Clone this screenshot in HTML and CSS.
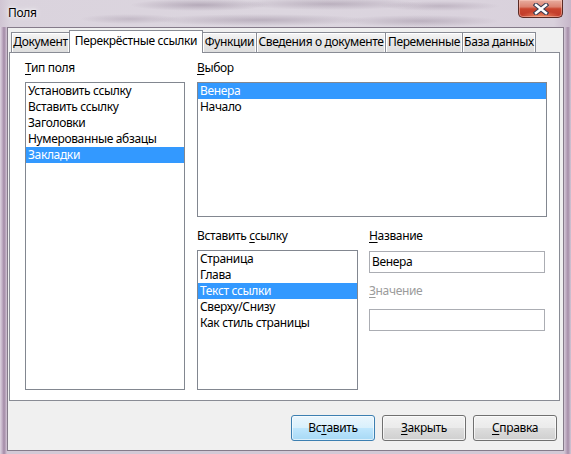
FILE: index.html
```html
<!DOCTYPE html>
<html lang="ru">
<head>
<meta charset="utf-8">
<title>Поля</title>
<link rel="stylesheet" href="styles.css">
</head>
<body>
<div class="window">
  <div class="titlebar">
    <span class="title">Поля</span>
    <div class="close">
      <svg width="16" height="12" viewBox="0 0 16 12">
        <path d="M3 2 L13 10 M13 2 L3 10" stroke="#3b3d52" stroke-width="4.6" stroke-linecap="square" fill="none"/>
        <path d="M3 2 L13 10 M13 2 L3 10" stroke="#ffffff" stroke-width="2.4" stroke-linecap="square" fill="none"/>
      </svg>
    </div>
  </div>
  <div class="client">
    <div class="tabs">
      <div class="tab t1">Документ</div>
      <div class="tab t2 active">Перекрёстные ссылки</div>
      <div class="tab t3">Функции</div>
      <div class="tab t4">Сведения о документе</div>
      <div class="tab t5">Переменные</div>
      <div class="tab t6">База данных</div>
    </div>
    <div class="panel">
      <div class="col col-left">
        <div class="label"><u>Т</u>ип поля</div>
        <ul class="list grow">
          <li>Установить ссылку</li>
          <li>Вставить ссылку</li>
          <li>Заголовки</li>
          <li>Нумерованные абзацы</li>
          <li class="sel">Закладки</li>
        </ul>
      </div>
      <div class="col col-right">
        <div class="label"><u>В</u>ыбор</div>
        <ul class="list list-choice">
          <li class="sel">Венера</li>
          <li>Начало</li>
        </ul>
        <div class="lower">
          <div class="col">
            <div class="label">Вставить <u>с</u>сылку</div>
            <ul class="list grow">
              <li>Страница</li>
              <li>Глава</li>
              <li class="sel">Текст ссылки</li>
              <li>Сверху/Снизу</li>
              <li>Как стиль страницы</li>
            </ul>
          </div>
          <div class="col">
            <div class="label"><u>Н</u>азвание</div>
            <div class="input">Венера</div>
            <div class="label disabled value-label"><u>З</u>начение</div>
            <div class="input input-second"></div>
          </div>
        </div>
      </div>
    </div>
    <div class="buttons">
      <div class="btn default">Вс<u>т</u>авить</div>
      <div class="btn"><u>З</u>акрыть</div>
      <div class="btn"><u>С</u>правка</div>
    </div>
  </div>
</div>
</body>
</html>
```

FILE: styles.css
```css
* { box-sizing: border-box; margin: 0; padding: 0; }
html, body { width: 571px; height: 454px; overflow: hidden; }
body {
  font-family: "Noto Sans", "Open Sans", sans-serif;
  font-size: 12px;
  line-height: 16px;
  letter-spacing: -0.35px;
  color: #000;
  background: #d6cfd9;
}
u { text-decoration: underline; text-underline-offset: 2px; }

.window {
  width: 571px;
  height: 454px;
  display: flex;
  flex-direction: column;
  padding: 0 7px 3px;
  background:
    linear-gradient(to right,
      #ddd4e0 0px, #c5b3c8 2px, #a28aa6 4px, #c2b0c5 6px, #d3c9d6 7px,
      #d3c9d6 564px, #c0adc3 566px, #a58ea8 568px, #d3c7d6 571px);
}

.titlebar {
  height: 27px;
  margin: 0 -7px;
  padding: 0 8px;
  display: flex;
  justify-content: space-between;
  align-items: flex-start;
  background:
    radial-gradient(ellipse 70px 6px at 200px 5px, rgba(110, 90, 115, .35), transparent),
    radial-gradient(ellipse 90px 6px at 330px 4px, rgba(110, 90, 115, .30), transparent),
    radial-gradient(ellipse 60px 5px at 440px 6px, rgba(110, 90, 115, .25), transparent),
    radial-gradient(ellipse 110px 6px at 260px 20px, rgba(110, 90, 115, .30), transparent),
    radial-gradient(ellipse 80px 6px at 420px 21px, rgba(110, 90, 115, .28), transparent),
    radial-gradient(ellipse 50px 5px at 130px 19px, rgba(110, 90, 115, .22), transparent),
    linear-gradient(to right, #d0c5d3 0px, #dad3dd 10px, #dcd6df 50%, #d9d1dc 97%, #c6b6c9 100%);
}
.title {
  padding-top: 5px;
  line-height: 16px;
  color: #000;
  text-shadow: 0 0 6px #fff, 0 0 3px #fff;
}
.close {
  width: 45px;
  height: 18px;
  border: 1px solid #5a2a24;
  border-top: none;
  border-radius: 0 0 5px 5px;
  background:
    radial-gradient(ellipse 20px 6px at 50% 100%, rgba(255, 170, 120, .8), transparent),
    linear-gradient(#e8ad9f 0%, #dc8371 40%, #c9452e 52%, #c0392a 100%);
  box-shadow: inset 0 0 0 1px rgba(255, 210, 200, .45);
  display: flex;
  align-items: center;
  justify-content: center;
}

.client {
  flex: 1;
  display: flex;
  flex-direction: column;
  border: 1px solid #857b8a;
  background: #f0f0f0;
  padding: 2px 3px 0 1px;
}

.tabs {
  display: flex;
  align-items: flex-end;
  height: 22px;
  padding-left: 2px;
  position: relative;
  z-index: 1;
}
.tab {
  height: 20px;
  margin-left: -1px;
  border: 1px solid #898c95;
  border-bottom: none;
  background: linear-gradient(#f6f6f6, #e6e6e6 50%, #dedede);
  box-shadow: inset 1px 1px 0 #ffffff, inset -1px 0 0 #fbfbfb;
  text-align: center;
  line-height: 18px;
  white-space: nowrap;
}
.t1 { width: 59px; margin-left: 0; }
.t2 { width: 134px; }
.t3 { width: 55px; }
.t4 { width: 130px; }
.t5 { width: 78px; }
.t6 { width: 74px; }
.tab.active {
  height: 23px;
  margin-bottom: -1px;
  background: #fff;
  box-shadow: none;
  line-height: 19px;
  position: relative;
  z-index: 2;
}

.panel {
  height: 349px;
  border: 1px solid #898c95;
  background: #fff;
  display: grid;
  grid-template-columns: 160px 350px;
  column-gap: 12px;
  padding: 7px 12px 10px 15px;
}
.col {
  display: flex;
  flex-direction: column;
  min-height: 0;
}
.label {
  height: 16px;
  margin-bottom: 6px;
  white-space: nowrap;
}
.label.disabled { color: #9b9b9b; }

.list {
  list-style: none;
  border: 1px solid #828790;
  background: #fff;
}
.list li {
  height: 16px;
  padding: 0 2px;
  white-space: nowrap;
}
.list li.sel { background: #3399ff; color: #fff; }
.grow { flex: 1; }
.list-choice { height: 135px; }

.lower {
  flex: 1;
  margin-top: 11px;
  display: grid;
  grid-template-columns: 161px 176px;
  column-gap: 11px;
}
.input {
  width: 176px;
  height: 22px;
  margin-top: 1px;
  border: 1px solid #abadb3;
  background: #fff;
  padding: 2px 2px;
  line-height: 16px;
}
.value-label { margin-top: 10px; margin-bottom: 10px; }
.input-second { margin-top: 0; }

.buttons {
  display: flex;
  justify-content: flex-end;
  gap: 7px;
  margin-top: 14px;
  padding-right: 3px;
}
.btn {
  width: 84px;
  height: 26px;
  border: 1px solid #707070;
  border-radius: 3px;
  background: linear-gradient(#f2f2f2 0%, #ebebeb 48%, #dddddd 52%, #cfcfcf 100%);
  box-shadow: inset 0 0 0 1px rgba(255, 255, 255, .7);
  text-align: center;
  line-height: 23px;
}
.btn.default {
  border-color: #3c7fb1;
  background: linear-gradient(#eaf6fd 0%, #d9f0fc 48%, #bee6fd 52%, #a7d9f5 100%);
  box-shadow: inset 0 0 0 1px rgba(255, 255, 255, .6);
}
```
